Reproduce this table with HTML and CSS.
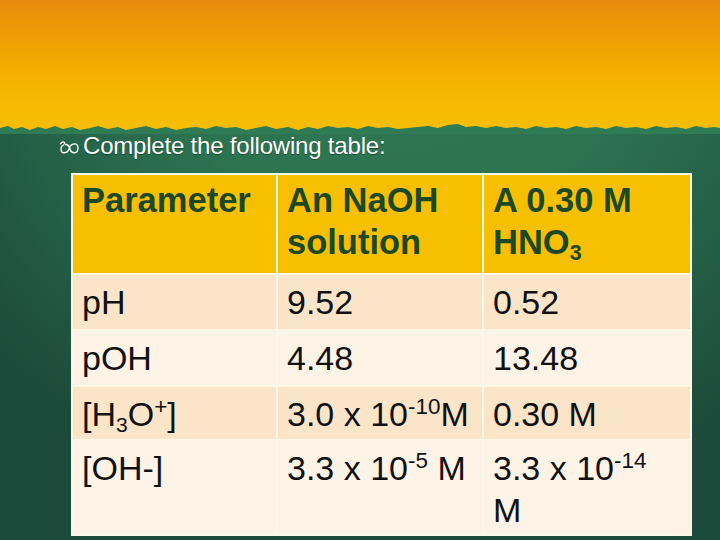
FILE: index.html
```html
<!DOCTYPE html>
<html>
<head>
<meta charset="utf-8">
<link rel="stylesheet" href="styles.css">
</head>
<body>
<div class="slide">
  <div class="banner"></div>
  <svg class="edge" width="720" height="10" viewBox="0 0 720 10" preserveAspectRatio="none">
    <polygon fill="#2f7b53" points="0,4 8,2 14,5 22,3 30,6 38,3 46,5 55,2 63,5 72,3 80,6 90,4 98,2 108,5 118,3 126,6 136,4 146,2 156,5 166,3 176,6 186,4 196,3 206,5 216,2 226,4 236,3 246,6 256,4 266,2 276,5 288,3 298,6 308,3 318,5 328,2 338,4 348,3 358,5 368,2 378,4 388,3 398,5 408,4 418,3 428,2 438,4 448,1 458,0 466,3 476,2 486,4 496,2 506,4 516,3 526,5 536,2 546,4 556,3 566,5 576,2 586,4 596,3 606,5 616,2 626,4 636,3 646,5 656,2 666,4 676,3 686,5 696,2 706,4 714,3 720,4 720,10 0,10"/>
  </svg>
  <div class="content">
    <p class="lead">
      <svg class="bullet" width="21" height="15" viewBox="0 0 20 14">
        <path d="M1.5 3.5 C2.5 1.2 5 1.2 5.5 3 M4.5 4.5 C1 5.5 1 12 5 12 C8 12 9.5 9 10 7.5 C10.5 5 13 3.5 15.5 3.5 C19 3.5 19 12 15 12 C12 12 10.5 9.5 10 7.5 C9.5 5.5 8 4 6 4.2" fill="none" stroke="#fff" stroke-width="1.3" stroke-linecap="round"/>
      </svg>
      <span>Complete the following table:</span>
    </p>
    <table class="data">
      <colgroup>
        <col class="c1"><col class="c2"><col class="c3">
      </colgroup>
      <tr class="head">
        <th>Parameter</th>
        <th>An NaOH solution</th>
        <th>A 0.30 M HNO<sub>3</sub></th>
      </tr>
      <tr class="odd r1">
        <td>pH</td>
        <td>9.52</td>
        <td>0.52</td>
      </tr>
      <tr class="even r2">
        <td>pOH</td>
        <td>4.48</td>
        <td>13.48</td>
      </tr>
      <tr class="odd r3">
        <td>[H<sub>3</sub>O<sup>+</sup>]</td>
        <td>3.0 x 10<sup>-10</sup>M</td>
        <td>0.30 M</td>
      </tr>
      <tr class="even r4">
        <td>[OH-]</td>
        <td>3.3 x 10<sup>-5</sup> M</td>
        <td>3.3 x 10<sup>-14</sup> M</td>
      </tr>
    </table>
  </div>
</div>
</body>
</html>
```

FILE: styles.css
```css
html, body {
  margin: 0;
  padding: 0;
}
body {
  background: #1f4d3d;
}
.slide {
  width: 720px;
  height: 540px;
  overflow: hidden;
  display: flex;
  flex-direction: column;
  background:
    radial-gradient(ellipse 75% 95% at 55% 0%, #2f7b53 0%, #2c7350 45%, #245e46 75%, #1d4b3b 100%);
  font-family: "Liberation Sans", Arial, sans-serif;
}
.banner {
  height: 124px;
  flex: none;
  background: linear-gradient(180deg, #e88a0c 0%, #ef9d05 30%, #f3ae00 55%, #f6bb02 85%, #f6bd04 100%);
}
.edge {
  display: block;
  flex: none;
  background: #f6bd04;
}
.content {
  display: flex;
  flex-direction: column;
  padding-left: 71px;
}
.lead {
  margin: 0 0 0 -12px;
  display: flex;
  align-items: center;
  gap: 3px;
  height: 24px;
  color: #ffffff;
  font-size: 24px;
  letter-spacing: -0.2px;
  text-shadow: 0 1px 1px rgba(0, 0, 0, 0.35);
}
.bullet {
  flex: none;
  margin-top: 2px;
}
.data {
  margin-top: 15px;
  width: 619px;
  border-collapse: collapse;
  table-layout: fixed;
  border: 2px solid #fdf7e8;
}
.c1 { width: 205px; }
.c2 { width: 206px; }
.c3 { width: 208px; }
.data th, .data td {
  border: 2px solid #fdf7e8;
  padding: 6px 10px 0 9px;
  text-align: left;
  vertical-align: top;
  font-size: 34px;
  line-height: 42px;
  color: #111;
}
.data th {
  background: #f6c000;
  color: #1c4826;
  font-weight: bold;
  font-size: 34.5px;
  padding-top: 4px;
}
.head { height: 100px; }
.r1 { height: 56px; }
.r2 { height: 56px; }
.r3 { height: 54px; }
.r4 { height: 95px; }
.odd td { background: #fbe5c9; }
.even td { background: #fdf3e7; }
.data sub {
  font-size: 0.62em;
  line-height: 0;
  vertical-align: -0.3em;
}
.data sup {
  font-size: 0.66em;
  line-height: 0;
  vertical-align: 0.55em;
}
```
